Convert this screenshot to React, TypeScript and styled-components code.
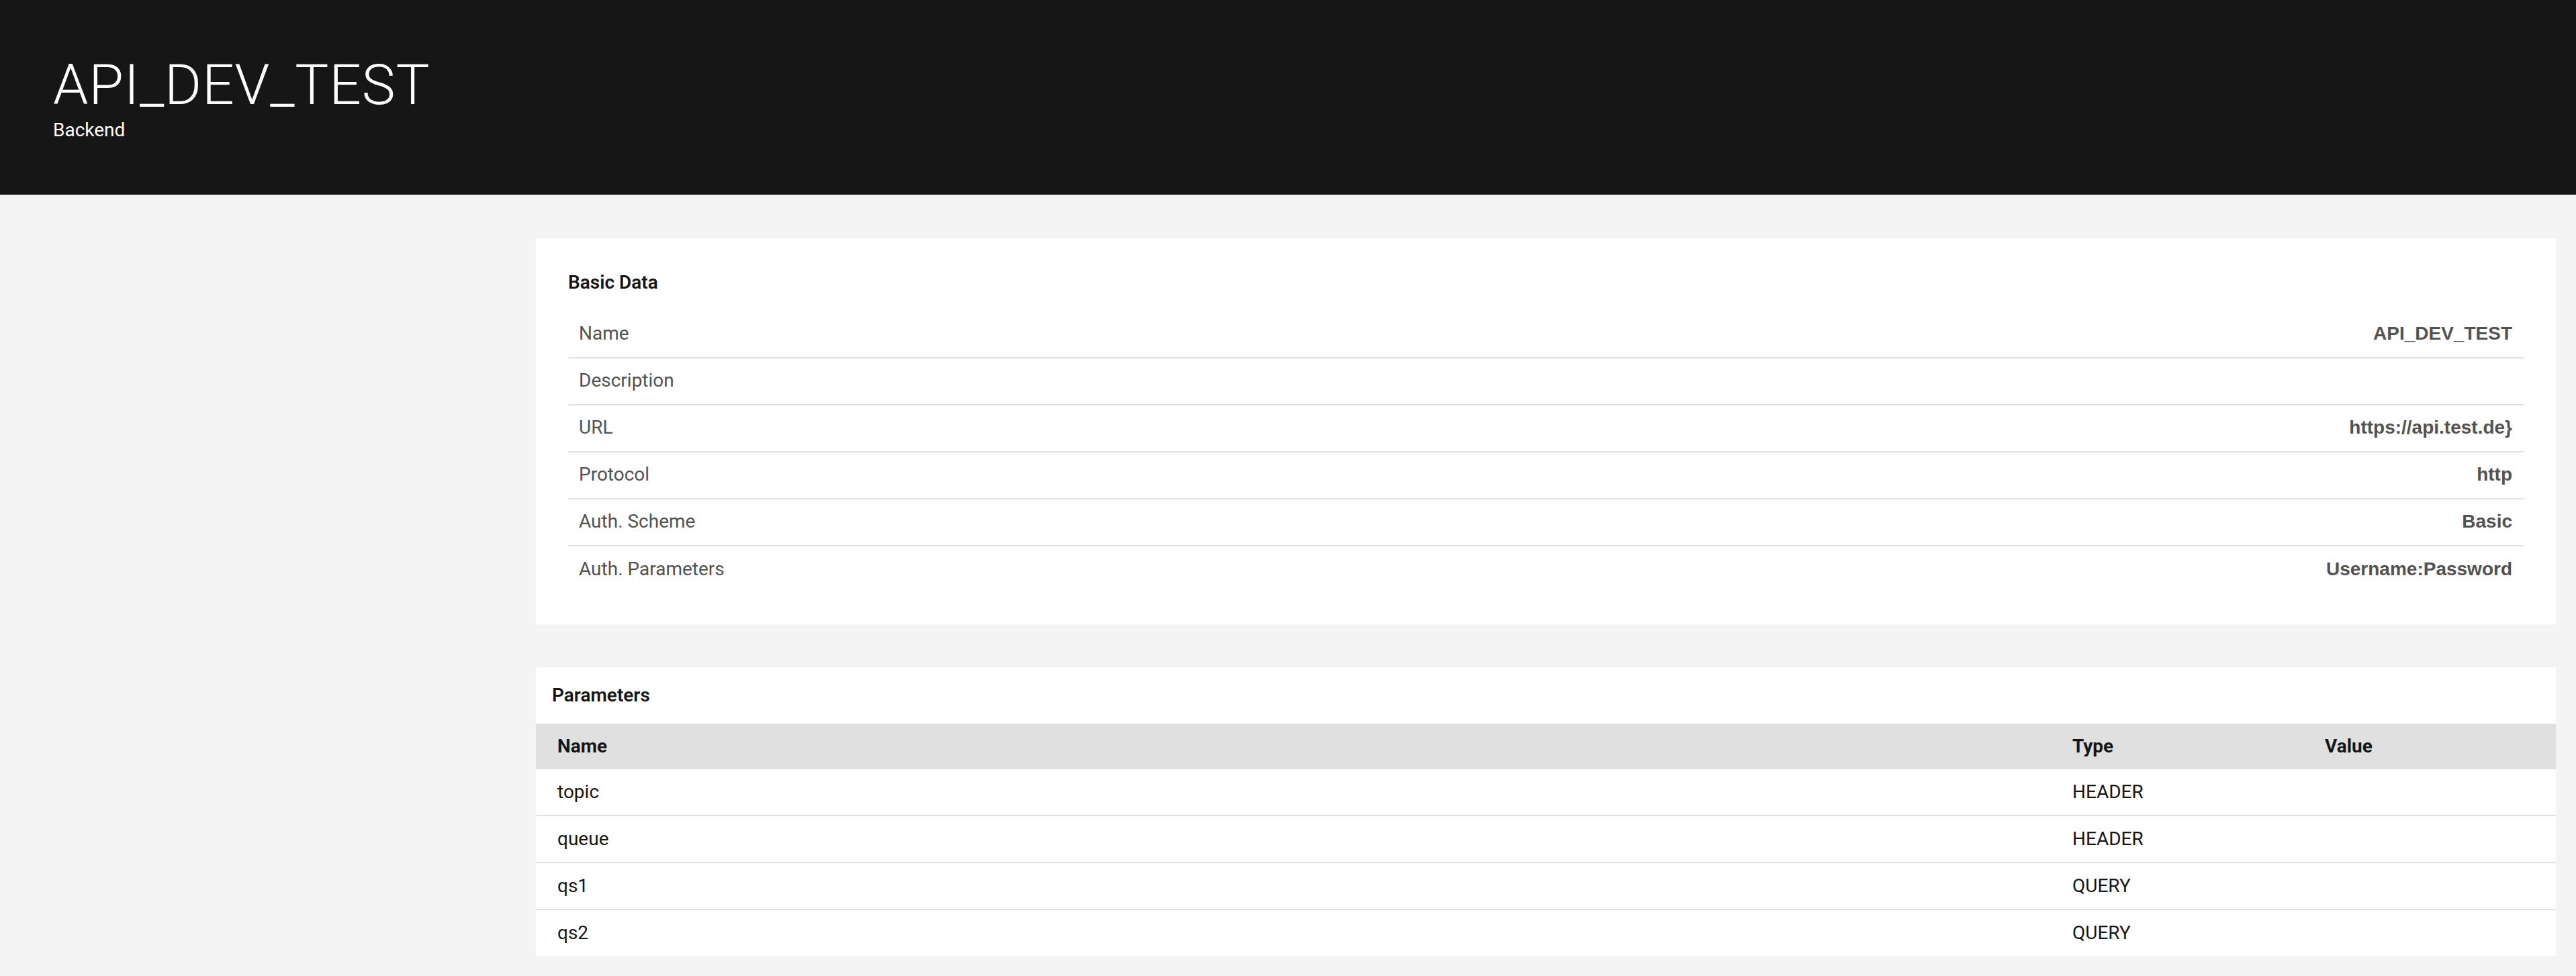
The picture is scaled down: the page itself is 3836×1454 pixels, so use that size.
import React from "react";
import styled, { createGlobalStyle } from "styled-components";

const GlobalStyle = createGlobalStyle`
  html, body {
    margin: 0;
    padding: 0;
    background: #f4f4f4;
  }
  body {
    font-family: Roboto, "Noto Sans", "Liberation Sans", sans-serif;
    color: #161616;
    -webkit-font-smoothing: antialiased;
  }
  * { box-sizing: border-box; }
`;

const Page = styled.div`
  min-height: 1454px;
  background: #f4f4f4;
`;

const Masthead = styled.header`
  background: #161616;
  color: #ffffff;
  padding: 78px 80px 78px 79px;
`;

const Title = styled.h1`
  margin: 0;
  font-family: Roboto, sans-serif;
  font-weight: 300;
  font-size: 84px;
  line-height: 98px;
  letter-spacing: 0.8px;
`;

const Subtitle = styled.div`
  font-size: 28px;
  line-height: 36px;
  font-weight: 400;
`;

const Layout = styled.main`
  display: grid;
  grid-template-columns: 768px 1fr;
  column-gap: 30px;
  padding: 65px 30px 0 0;
`;

const Aside = styled.aside``;

const Stack = styled.div`
  display: flex;
  flex-direction: column;
  gap: 64px;
`;

const Card = styled.section<{ $pad: string }>`
  background: #ffffff;
  padding: ${(p) => p.$pad};
`;

const CardTitle = styled.h2<{ $gap: number; $inset?: number }>`
  margin: 0 0 ${(p) => p.$gap}px 0;
  padding-left: ${(p) => p.$inset ?? 0}px;
  font-size: 28px;
  line-height: 36px;
  font-weight: 600;
  color: #161616;
`;

const List = styled.div`
  display: flex;
  flex-direction: column;
`;

const ListRow = styled.div`
  display: flex;
  align-items: center;
  justify-content: space-between;
  height: 70px;
  padding: 0 17px 2px 16px;
  border-bottom: 2px solid #e0e0e0;
  &:last-child {
    border-bottom: none;
    height: 68px;
    padding-bottom: 0;
  }
`;

const Label = styled.span`
  font-size: 28px;
  line-height: 36px;
  color: #525252;
  font-weight: 400;
`;

const Value = styled.span`
  font-family: "Liberation Sans", Arial, sans-serif;
  font-size: 28px;
  line-height: 36px;
  font-weight: 700;
  color: #525252;
`;

const Table = styled.table`
  width: 100%;
  border-collapse: separate;
  border-spacing: 0;
  table-layout: fixed;
`;

const HeadCell = styled.th<{ $w: string }>`
  width: ${(p) => p.$w};
  background: #e0e0e0;
  padding: 16px 32px;
  text-align: left;
  font-size: 28px;
  line-height: 36px;
  font-weight: 700;
  color: #161616;
`;

const BodyRow = styled.tr`
  &:last-child td {
    border-bottom: none;
  }
`;

const Cell = styled.td`
  padding: 16px 32px;
  border-bottom: 2px solid #e0e0e0;
  font-size: 28px;
  line-height: 36px;
  font-weight: 400;
  color: #161616;
`;

const basicData: [string, string][] = [
  ["Name", "API_DEV_TEST"],
  ["Description", ""],
  ["URL", "https://api.test.de}"],
  ["Protocol", "http"],
  ["Auth. Scheme", "Basic"],
  ["Auth. Parameters", "Username:Password"],
];

const params: [string, string, string][] = [
  ["topic", "HEADER", ""],
  ["queue", "HEADER", ""],
  ["qs1", "QUERY", ""],
  ["qs2", "QUERY", ""],
];

export default function App() {
  return (
    <Page>
      <GlobalStyle />
      <Masthead>
        <Title>API_DEV_TEST</Title>
        <Subtitle>Backend</Subtitle>
      </Masthead>
      <Layout>
        <Aside />
        <Stack>
          <Card $pad="48px 48px 48px 48px">
            <CardTitle $gap={25}>Basic Data</CardTitle>
            <List>
              {basicData.map(([k, v]) => (
                <ListRow key={k}>
                  <Label>{k}</Label>
                  <Value>{v}</Value>
                </ListRow>
              ))}
            </List>
          </Card>
          <Card $pad="24px 0 0 0">
            <CardTitle $gap={24} $inset={24}>
              Parameters
            </CardTitle>
            <Table>
              <thead>
                <tr>
                  <HeadCell $w="75%">Name</HeadCell>
                  <HeadCell $w="12.5%">Type</HeadCell>
                  <HeadCell $w="12.5%">Value</HeadCell>
                </tr>
              </thead>
              <tbody>
                {params.map(([n, t, v]) => (
                  <BodyRow key={n}>
                    <Cell>{n}</Cell>
                    <Cell>{t}</Cell>
                    <Cell>{v}</Cell>
                  </BodyRow>
                ))}
              </tbody>
            </Table>
          </Card>
        </Stack>
      </Layout>
    </Page>
  );
}
